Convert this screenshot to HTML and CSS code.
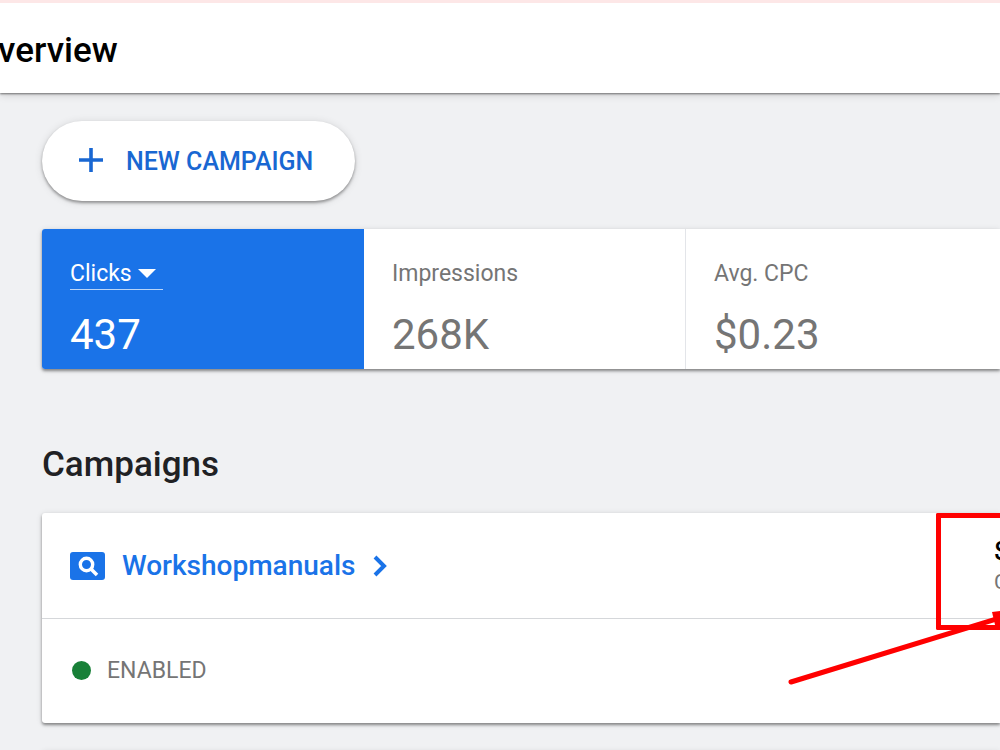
FILE: index.html
```html
<!DOCTYPE html>
<html lang="en">
  <head>
    <meta charset="UTF-8" />
    <meta name="viewport" content="width=device-width, initial-scale=1.0" />
    <title>Overview</title>
    <link rel="stylesheet" href="styles.css">
  </head>
  <body>
    <header class="page-header">
      <h1 class="page-title">Overview</h1>
    </header>

    <main class="content">
      <button class="new-campaign" type="button">
        <svg class="plus-icon" viewBox="0 0 24 26" aria-hidden="true">
          <path d="M10.200 0h3.600v10.200H24v3.600H13.800V24h-3.600V13.800H0v-3.600h10.200z" />
        </svg>
        NEW CAMPAIGN
      </button>

      <section class="card scorecard">
        <div class="stat stat-active">
          <button class="stat-label stat-picker" type="button">
            Clicks
            <svg class="caret" viewBox="0 0 18 9" aria-hidden="true">
              <path d="M0 0h18l-9 9z" />
            </svg>
          </button>
          <div class="stat-value">437</div>
        </div>
        <div class="stat">
          <div class="stat-label">Impressions</div>
          <div class="stat-value">268K</div>
        </div>
        <div class="stat">
          <div class="stat-label">Avg. CPC</div>
          <div class="stat-value">$0.23</div>
        </div>
      </section>

      <h2 class="section-title">Campaigns</h2>

      <section class="card campaign">
        <div class="campaign-head">
          <a class="campaign-link" href="#">
            <svg class="search-icon" viewBox="0 0 35 28" aria-hidden="true">
              <rect width="35" height="28" rx="3" fill="#1a73e8" />
              <circle cx="16.5" cy="12.5" r="6.200" fill="none" stroke="#fff" stroke-width="3.400" />
              <path d="M20.500 16.500l6.500 6.500" stroke="#fff" stroke-width="3.600" />
            </svg>
            Workshopmanuals
            <svg class="chevron" viewBox="0 0 14 22" aria-hidden="true">
              <path d="M2 2l9 9-9 9" />
            </svg>
          </a>
          <div class="campaign-cost">
            <div class="cost-value">$</div>
            <div class="cost-label">Cost</div>
          </div>
        </div>
        <div class="campaign-status">
          <span class="status-dot"></span>
          ENABLED
        </div>

        <!-- Callout around the cost -->
        <div class="callout-box"></div>
        <svg class="callout-arrow" viewBox="0 0 214 78" aria-hidden="true">
          <path d="M5 73L214 9" fill="none" stroke="#f00" stroke-width="5" stroke-linecap="round" />
          <path d="M206 3l8-1v16l-4 2z" fill="#f00" />
        </svg>
      </section>

      <section class="card next-card"></section>
    </main>
  </body>
</html>
```

FILE: styles.css
```css
* {
  margin: 0;
  padding: 0;
  box-sizing: border-box;
}

body {
  font-family: Roboto, "Liberation Sans", sans-serif;
  background: #f0f1f3;
  color: #202124;
  height: 100vh;
  overflow: hidden;
}

button {
  font: inherit;
  color: inherit;
  background: none;
  border: 0;
  cursor: pointer;
}

.page-header {
  padding: 25px 0 19px;
  border-top: 3px solid #fde7e7;
  background: #fff;
  box-shadow: 0 1px 2px rgba(0, 0, 0, 0.5), 0 2px 8px rgba(0, 0, 0, 0.15);
}

/* The title starts off the left edge */
.page-title {
  margin-left: -26px;
  font-size: 35px;
  font-weight: 500;
  line-height: 46px;
  color: #000;
}

.content {
  padding: 28px 0 0 42px;
}

.new-campaign {
  display: flex;
  align-items: center;
  gap: 23px;
  height: 80px;
  padding: 0 42px 0 37px;
  border-radius: 40px;
  background: #fff;
  color: #1967d2;
  font-size: 25px;
  font-weight: 500;
  box-shadow: 0 2px 3px rgba(0, 0, 0, 0.35), 0 1px 8px rgba(0, 0, 0, 0.12);
}

.plus-icon {
  width: 24px;
  height: 26px;
  fill: currentColor;
}

.card {
  background: #fff;
  border-radius: 3px 0 0 3px;
  box-shadow: 0 2px 3px rgba(0, 0, 0, 0.4), 0 1px 6px rgba(0, 0, 0, 0.12);
}

.scorecard {
  display: flex;
  height: 140px;
  margin-top: 28px;
}

.stat {
  flex: 0 0 322px;
  padding: 28px;
  border-right: 1px solid #e3e5e9;
  color: #757575;
}

.stat-active {
  border: 0;
  border-radius: 3px 0 0 3px;
  background: #1a73e8;
  color: #fff;
}

.stat-label {
  font-size: 23px;
  line-height: 33px;
}

.stat-picker {
  display: flex;
  align-items: center;
  gap: 6px;
  height: 33px;
  padding-right: 7px;
  border-bottom: 1px solid rgba(255, 255, 255, 0.7);
}

.caret {
  width: 18px;
  height: 9px;
  fill: currentColor;
}

.stat-value {
  margin-top: 20px;
  font-size: 42px;
  line-height: 50px;
}

.section-title {
  margin-top: 73px;
  font-size: 35px;
  font-weight: 500;
  line-height: 46px;
}

.campaign {
  position: relative;
  margin-top: 25px;
}

.campaign-head {
  display: flex;
  align-items: center;
  justify-content: space-between;
  height: 106px;
  padding-left: 28px;
  border-bottom: 1px solid #d5d7da;
}

.campaign-link {
  display: flex;
  align-items: center;
  gap: 17px;
  color: #1a73e8;
  font-size: 28px;
  font-weight: 500;
  line-height: 34px;
  text-decoration: none;
}

.search-icon {
  width: 35px;
  height: 28px;
}

.chevron {
  width: 14px;
  height: 22px;
  fill: none;
  stroke: currentColor;
  stroke-width: 4;
}

/* The cost column runs on past the right edge */
.campaign-cost {
  flex: 0 0 6px;
  min-width: 0;
  width: 6px;
  white-space: nowrap;
}

.cost-value {
  font-size: 25px;
  font-weight: 500;
  line-height: 32px;
  color: #000;
}

.cost-label {
  font-size: 21px;
  line-height: 28px;
  color: #757575;
}

.campaign-status {
  display: flex;
  align-items: center;
  gap: 16px;
  height: 104px;
  padding: 0 0 2px 30px;
  color: #757575;
  font-size: 23px;
}

.status-dot {
  width: 19px;
  height: 19px;
  border-radius: 50%;
  background: #188038;
}

.callout-box {
  position: absolute;
  top: 0;
  right: 0;
  width: 64px;
  height: 117px;
  border: 5px solid #f00;
  border-right: 0;
  border-radius: 2px 0 0 2px;
}

.callout-arrow {
  position: absolute;
  top: 96px;
  right: 0;
  width: 214px;
  height: 78px;
}

.next-card {
  height: 106px;
  margin-top: 28px;
}
```
